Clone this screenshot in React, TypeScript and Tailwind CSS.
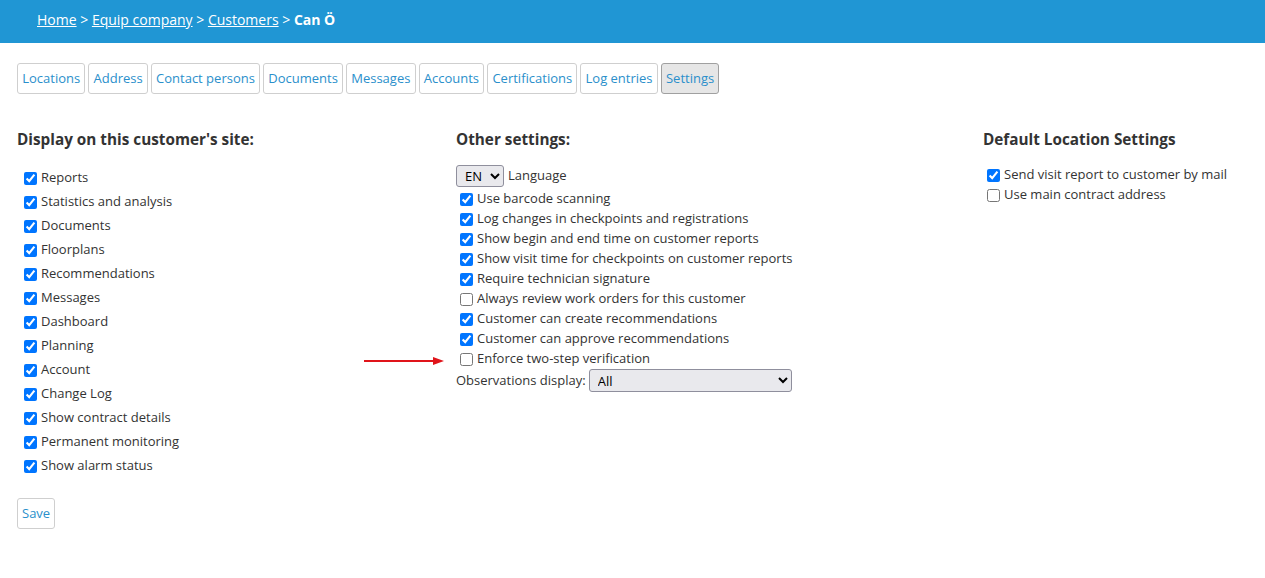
import React from "react";

const tabs = [
  "Locations",
  "Address",
  "Contact persons",
  "Documents",
  "Messages",
  "Accounts",
  "Certifications",
  "Log entries",
  "Settings",
];

const siteItems = [
  "Reports",
  "Statistics and analysis",
  "Documents",
  "Floorplans",
  "Recommendations",
  "Messages",
  "Dashboard",
  "Planning",
  "Account",
  "Change Log",
  "Show contract details",
  "Permanent monitoring",
  "Show alarm status",
];

const otherItems: [string, boolean][] = [
  ["Use barcode scanning", true],
  ["Log changes in checkpoints and registrations", true],
  ["Show begin and end time on customer reports", true],
  ["Show visit time for checkpoints on customer reports", true],
  ["Require technician signature", true],
  ["Always review work orders for this customer", false],
  ["Customer can create recommendations", true],
  ["Customer can approve recommendations", true],
  ["Enforce two-step verification", false],
];

function Check({ checked }: { checked: boolean }) {
  return (
    <input
      type="checkbox"
      defaultChecked={checked}
      className="m-0 mr-[4px] h-[13px] w-[13px] accent-[#0075ff]"
    />
  );
}

export default function App() {
  return (
    <div className="relative min-h-[578px] bg-white font-['Open_Sans',sans-serif] text-[13px] text-[#333]">
      <header className="h-[43px] bg-[#2096d4] pl-[37px] pt-[9px] text-[14px] text-white">
        <a href="#" className="underline">Home</a> &gt;{" "}
        <a href="#" className="underline">Equip company</a> &gt;{" "}
        <a href="#" className="underline">Customers</a> &gt;{" "}
        <span className="font-bold">Can Ö</span>
      </header>

      <nav className="flex gap-[3px] px-[17px] pt-[20px]">
        {tabs.map((t) => (
          <a
            key={t}
            href="#"
            className={`flex h-[31px] items-center rounded-[3px] border px-[4.2px] text-[13px] text-[#2a8fcb] ${
              t === "Settings" ? "border-[#a0a0a0] bg-[#e6e6e6]" : "border-[#cfcfcf] bg-white"
            }`}
          >
            {t}
          </a>
        ))}
      </nav>

      <div className="mt-[34px] grid grid-cols-[439px_527px_1fr] pl-[17px]">
        <section>
          <h2 className="text-[15.3px] font-bold leading-[22px] text-[#333]">Display on this customer's site:</h2>
          <div className="mt-[16px] pl-[7px]">
            {siteItems.map((s) => (
              <label key={s} className="flex h-[24px] items-center">
                <Check checked />
                {s}
              </label>
            ))}
          </div>
          <button className="mt-[20px] h-[31px] rounded-[3px] border border-[#cfcfcf] px-[4px] text-[13px] text-[#2a8fcb]">
            Save
          </button>
        </section>

        <section>
          <h2 className="text-[15.3px] font-bold leading-[22px] text-[#333]">Other settings:</h2>
          <div className="mt-[15px] flex items-center">
            <select className="h-[22px] w-[48px] rounded-[3px] border border-[#8f8f9d] bg-[#e9e9ed] pl-[4px] text-[13px] text-black">
              <option>EN</option>
            </select>
            <span className="ml-[4px]">Language</span>
          </div>
          <div className="mt-[2px] pl-[4px]">
            {otherItems.map(([s, c]) => (
              <label key={s} className="flex h-[20px] items-center">
                <Check checked={c} />
                {s}
              </label>
            ))}
          </div>
          <div className="flex items-center">
            <span className="mr-[3px]">Observations display:</span>
            <select className="h-[23px] w-[203px] rounded-[3px] border border-[#8f8f9d] bg-[#e9e9ed] pl-[4px] text-[13px] text-black">
              <option>All</option>
            </select>
          </div>
        </section>

        <section>
          <h2 className="text-[15.3px] font-bold leading-[22px] text-[#333]">Default Location Settings</h2>
          <div className="mt-[15px] pl-[4px]">
            <label className="flex h-[20px] items-center">
              <Check checked />
              Send visit report to customer by mail
            </label>
            <label className="flex h-[20px] items-center">
              <Check checked={false} />
              Use main contract address
            </label>
          </div>
        </section>
      </div>

      <svg className="absolute left-[363px] top-[355px]" width="84" height="12" viewBox="0 0 84 12">
        <line x1="1" y1="6" x2="72" y2="6" stroke="#e0141a" strokeWidth="2" />
        <polygon points="70,2 81,6 70,10" fill="#e0141a" />
      </svg>
    </div>
  );
}
